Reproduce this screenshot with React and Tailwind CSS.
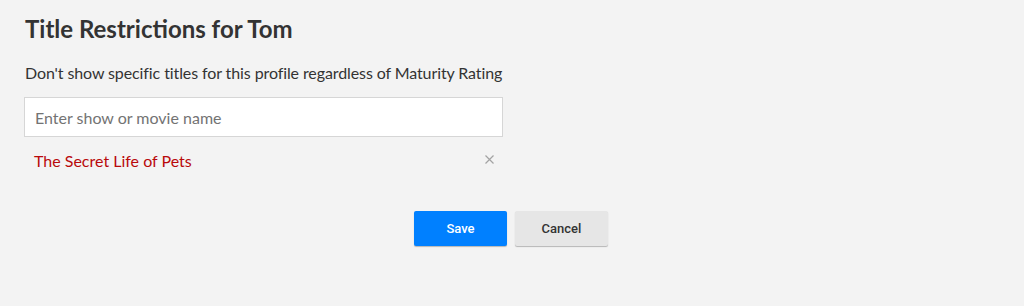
export default function App() {
  return (
    <div className="min-h-[306px] w-[1024px] bg-[#f3f3f3] font-['Lato',sans-serif] text-[#333]">
      <div className="px-6 pt-[14px]">
        <h1 className="text-[24px] leading-[30px] font-bold ml-[1px]">Title Restrictions for Tom</h1>
        <p className="mt-[19px] text-[16px] leading-[20px] tracking-[-0.1px] ml-[1px]">
          Don't show specific titles for this profile regardless of Maturity Rating
        </p>
        <div className="mt-[14px] w-[479px]">
          <input
            type="text"
            placeholder="Enter show or movie name"
            className="h-10 w-full border border-[#d6d6d6] bg-white px-[10px] text-[16px] text-[#333] outline-none placeholder:text-[#737373]"
          />
          <div className="flex items-center justify-between pl-[10px] pr-[9px] pt-[14px]">
            <span className="text-[16px] leading-[20px] text-[#b9090b]">The Secret Life of Pets</span>
            <button className="mb-[4px] text-[#a3a3a3]" aria-label="Remove">
              <svg width="9" height="9" viewBox="0 0 9 9" fill="none" stroke="currentColor" strokeWidth="1.2">
                <path d="M0.5 0.5L8.5 8.5M8.5 0.5L0.5 8.5" />
              </svg>
            </button>
          </div>
        </div>
      </div>
      <div className="mt-[40px] flex justify-center gap-[8px] pr-[2px] font-['Roboto',sans-serif] text-[13px] font-medium">
        <button className="h-[35px] w-[93px] rounded-[2px] bg-[#0080ff] text-white shadow-[0_1px_1px_rgba(0,0,0,0.25)]">
          Save
        </button>
        <button className="h-[35px] w-[93px] rounded-[2px] bg-[#e6e6e6] text-[#333] shadow-[0_1px_1px_rgba(0,0,0,0.25)]">
          Cancel
        </button>
      </div>
    </div>
  );
}
